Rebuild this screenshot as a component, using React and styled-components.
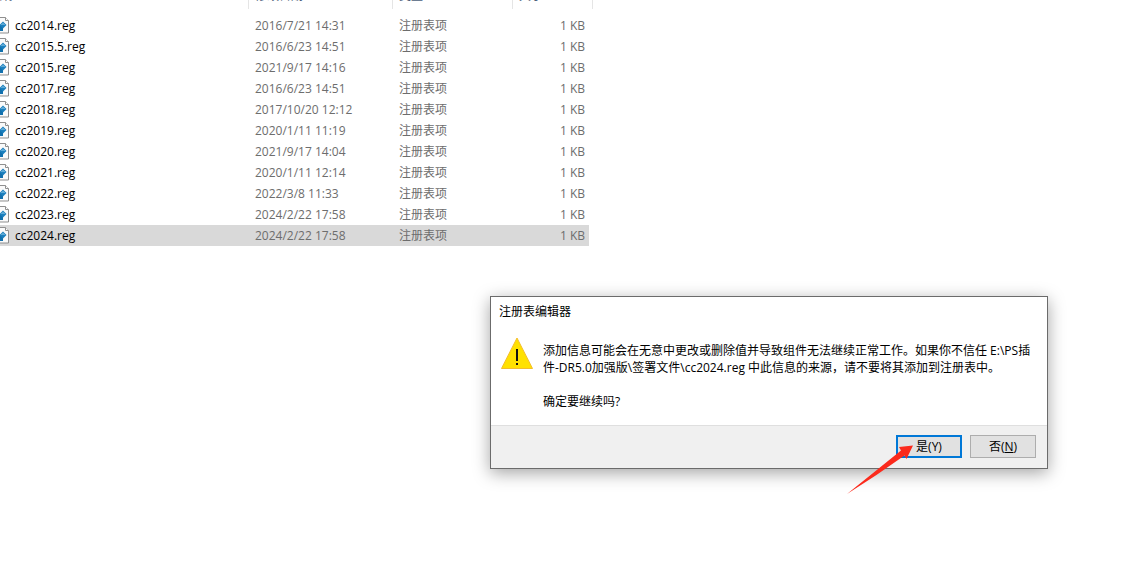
import React from "react";
import styled, { createGlobalStyle } from "styled-components";

const GlobalStyle = createGlobalStyle`
  * { box-sizing: border-box; }
  html, body { margin: 0; padding: 0; }
  body {
    background: #fff;
    color: #000;
    font: 12px/16px "Open Sans", "Noto Sans CJK SC", sans-serif;
  }
`;

const Desktop = styled.main`
  position: relative;
  min-height: 100vh;
  overflow: hidden;
  background: #fff;
`;

const FilePane = styled.section`
  margin: -16px 0 0 -9px;
`;

const FileTable = styled.table`
  width: 602px;
  table-layout: fixed;
  border-collapse: separate;
  border-spacing: 0;
`;

const Col = styled.col`
  width: ${(p) => p.$w}px;
`;

const HeadCell = styled.th`
  height: 25px;
  padding: 4px 6px 5px;
  border-right: 1px solid #e5e5e5;
  color: #4c607a;
  font-weight: 400;
  line-height: 16px;
  text-align: left;
  vertical-align: top;

  &:first-child { padding-left: 0; }
`;

const HeadSpacer = styled.td`
  height: 6px;
  padding: 0;
`;

const Row = styled.tr`
  --row: ${(p) => (p.$selected ? "#d9d9d9" : "transparent")};
`;

const Cell = styled.td`
  height: 21px;
  padding: 0 4px 0 6px;
  background: var(--row);
  color: #6d6d6d;
  text-align: ${(p) => p.$align || "left"};
  white-space: nowrap;
`;

const NameCell = styled(Cell)`
  padding: 0 0 0 2px;
  color: #000;
`;

const FileName = styled.div`
  display: flex;
  align-items: center;
  gap: 6px;
`;

const Dialog = styled.section`
  position: absolute;
  left: 490px;
  top: 296px;
  width: 558px;
  border: 1px solid #6b6b6b;
  background: #fff;
  box-shadow: 0 4px 16px rgba(0, 0, 0, 0.36);
`;

const DialogTitle = styled.h1`
  margin: 0;
  padding: 7px 8px;
  font-size: 12px;
  font-weight: 400;
  line-height: 16px;
`;

const DialogBody = styled.div`
  display: flex;
  gap: 10px;
  padding: 10px 10px 15px;
`;

const Message = styled.div`
  flex: 1;
  padding-top: 5px;
  line-height: 17px;
`;

const Paragraph = styled.p`
  margin: 0 0 17px;
  &:last-child { margin: 0; }
`;

const DialogFooter = styled.footer`
  display: flex;
  justify-content: flex-end;
  gap: 8px;
  padding: 9px 11px 10px;
  border-top: 1px solid #dfdfdf;
  background: #f0f0f0;
`;

const DialogButton = styled.button`
  width: 66px;
  height: 23px;
  padding: 0;
  border: ${(p) => (p.$primary ? "2px solid #0078d7" : "1px solid #adadad")};
  background: #e1e1e1;
  color: #000;
  font: inherit;
`;

const Pointer = styled.svg`
  position: absolute;
  left: 846px;
  top: 442px;
  pointer-events: none;
`;

const files = [
  ["cc2014.reg", "2016/7/21 14:31"],
  ["cc2015.5.reg", "2016/6/23 14:51"],
  ["cc2015.reg", "2021/9/17 14:16"],
  ["cc2017.reg", "2016/6/23 14:51"],
  ["cc2018.reg", "2017/10/20 12:12"],
  ["cc2019.reg", "2020/1/11 11:19"],
  ["cc2020.reg", "2021/9/17 14:04"],
  ["cc2021.reg", "2020/1/11 12:14"],
  ["cc2022.reg", "2022/3/8 11:33"],
  ["cc2023.reg", "2024/2/22 17:58"],
  ["cc2024.reg", "2024/2/22 17:58"],
];

function RegIcon() {
  return (
    <svg width="16" height="17" viewBox="0 0 16 17" aria-hidden="true">
      <path d="M1.5.5h11l3 3v12.500h-14z" fill="#fafafa" stroke="#8f8f8f" />
      <path d="M12.500.5v3h3" fill="#fff" stroke="#8f8f8f" />
      <path d="M3 7h4v2h3v5H3z" fill="#1270ad" />
      <path d="M10 4.500l3.500 3.500L10 11.500 6.500 8z" fill="#1b7fbd" />
      <path d="M8.500 8L10 6.500 11.500 8" fill="none" stroke="#a5d8f0" />
    </svg>
  );
}

function WarningIcon() {
  return (
    <svg width="32" height="34" viewBox="0 0 32 34" aria-hidden="true">
      <path d="M16 1L31.500 31.500H.5z" fill="#ffe100" stroke="#f3bd2b" strokeLinejoin="round" />
      <path d="M15 12h2v12h-2zM15 26h2v2h-2z" fill="#111" />
    </svg>
  );
}

export default function App() {
  return (
    <>
      <GlobalStyle />
      <Desktop>
        <FilePane>
          <FileTable>
            <colgroup>
              <Col $w={258} />
              <Col $w={144} />
              <Col $w={120} />
              <Col $w={76} />
              <Col $w={4} />
            </colgroup>
            <thead>
              <tr>
                <HeadCell>名称</HeadCell>
                <HeadCell>修改日期</HeadCell>
                <HeadCell>类型</HeadCell>
                <HeadCell colSpan={2}>大小</HeadCell>
              </tr>
            </thead>
            <tbody>
              <tr>
                <HeadSpacer colSpan={5} />
              </tr>
              {files.map(([name, date]) => (
                <Row key={name} $selected={name === "cc2024.reg"}>
                  <NameCell>
                    <FileName>
                      <RegIcon />
                      {name}
                    </FileName>
                  </NameCell>
                  <Cell>{date}</Cell>
                  <Cell>注册表项</Cell>
                  <Cell $align="right">1 KB</Cell>
                </Row>
              ))}
            </tbody>
          </FileTable>
        </FilePane>

        <Dialog role="dialog" aria-labelledby="dialog-title">
          <DialogTitle id="dialog-title">注册表编辑器</DialogTitle>
          <DialogBody>
            <WarningIcon />
            <Message>
              <Paragraph>
                添加信息可能会在无意中更改或删除值并导致组件无法继续正常工作。如果你不信任 E:\PS插
                <br />
                件-DR5.0加强版\签署文件\cc2024.reg 中此信息的来源，请不要将其添加到注册表中。
              </Paragraph>
              <Paragraph>确定要继续吗?</Paragraph>
            </Message>
          </DialogBody>
          <DialogFooter>
            <DialogButton type="button" $primary>是(Y)</DialogButton>
            <DialogButton type="button">
              否(<u>N</u>)
            </DialogButton>
          </DialogFooter>
        </Dialog>

        <Pointer width="70" height="54" viewBox="0 0 70 54" aria-hidden="true">
          <path d="M1 52L55 8.500 53 5 67 3.500 60.500 17 58.500 13.500Q30 34 1 52z" fill="#fb2a1c" />
        </Pointer>
      </Desktop>
    </>
  );
}
